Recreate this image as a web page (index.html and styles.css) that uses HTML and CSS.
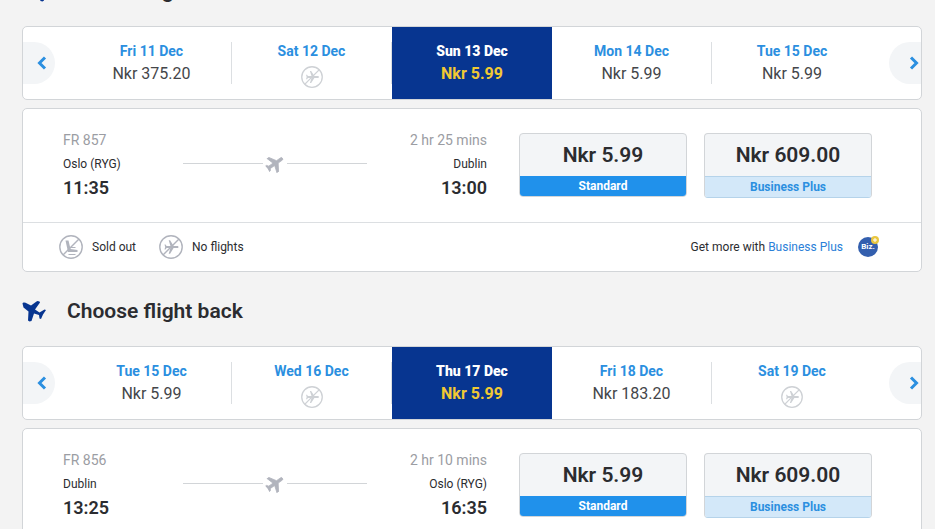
FILE: index.html
```
<!DOCTYPE html>
<html lang="en">
<head>
    <meta charset="UTF-8">
    <meta name="viewport" content="width=device-width, initial-scale=1.0">
    <title>Choose your flights</title>
    <link rel="stylesheet" href="styles.css">
</head>
<body>
    <!-- Shared icons -->
    <svg class="sprite" aria-hidden="true">
        <symbol id="jet" viewBox="0 0 28 24">
            <path d="M.5 4.500C1 3 3.500 3.500 5 4.500l4 2 5.500-4 1-.5 2 .5.5 1-5 7 4.500 3 5-3 1.500.5-3 4.500-2 4.500-1.500-.5-.5-3.500-5-1.500-2.500 7.500-2 .5-1.500-1 .5-9-5-4z"/>
        </symbol>
        <symbol id="plane" viewBox="2 2 19 20">
            <path stroke="currentColor" stroke-width=".8" d="M21 16v-2l-8-5V3.500c0-.83-.67-1.500-1.500-1.500S10 2.670 10 3.500V9l-8 5v2l8-2.500V19l-2 1.500V22l3.500-1 3.500 1v-1.500L13 19v-5.500l8 2.500z"/>
        </symbol>
        <symbol id="no-flights" viewBox="0 0 24 24">
            <circle cx="12" cy="12" r="11.2" fill="none" stroke="currentColor" stroke-width="1.400"/>
            <path d="M4 20L20 4" stroke="currentColor" stroke-width="1.400"/>
            <path transform="translate(12.5 12) rotate(90) scale(.7) translate(-11.5 -12)" fill="currentColor" d="M21 16v-2l-8-5V3.500c0-.83-.67-1.500-1.500-1.500S10 2.670 10 3.500V9l-8 5v2l8-2.500V19l-2 1.500V22l3.500-1 3.500 1v-1.500L13 19v-5.500l8 2.500z"/>
        </symbol>
        <symbol id="sold-out" viewBox="0 0 24 24">
            <circle cx="12" cy="12" r="11.2" fill="none" stroke="currentColor" stroke-width="1.400"/>
            <path d="M4 20L20 4" stroke="currentColor" stroke-width="1.400"/>
            <path fill="currentColor" d="M6.500 5.500h3l2 8.500 7 1v2H9z"/>
            <path d="M11 12.500h5.500M9.500 19.500h7" stroke="currentColor" stroke-width="1.200"/>
        </symbol>
        <symbol id="prev" viewBox="0 0 9 14">
            <path d="M7.500 1.500L2 7l5.500 5.500" fill="none" stroke="currentColor" stroke-width="3"/>
        </symbol>
        <symbol id="next" viewBox="0 0 9 14">
            <path d="M1.500 1.500L7 7l-5.500 5.500" fill="none" stroke="currentColor" stroke-width="3"/>
        </symbol>
    </svg>

    <main>
        <!-- OUTBOUND -->
        <section>
            <h2><svg class="out"><use href="#jet"/></svg>Choose flight out</h2>
            <div class="dates">
                <button class="arrow prev" aria-label="Earlier dates"><svg><use href="#prev"/></svg></button>
                <button class="day"><b>Fri 11 Dec</b><span>Nkr 375.20</span></button>
                <button class="day"><b>Sat 12 Dec</b><svg><use href="#no-flights"/></svg></button>
                <button class="day selected"><b>Sun 13 Dec</b><span>Nkr 5.99</span></button>
                <button class="day"><b>Mon 14 Dec</b><span>Nkr 5.99</span></button>
                <button class="day"><b>Tue 15 Dec</b><span>Nkr 5.99</span></button>
                <button class="arrow next" aria-label="Later dates"><svg><use href="#next"/></svg></button>
            </div>
            <div class="card">
                <div class="flight">
                    <div class="stop">
                        <span class="info">FR 857</span>
                        <span>Oslo (RYG)</span>
                        <strong>11:35</strong>
                    </div>
                    <div class="route"><svg><use href="#plane"/></svg></div>
                    <div class="stop arrival">
                        <span class="info">2 hr 25 mins</span>
                        <span>Dublin</span>
                        <strong>13:00</strong>
                    </div>
                    <button class="fare standard"><strong>Nkr 5.99</strong><span>Standard</span></button>
                    <button class="fare business"><strong>Nkr 609.00</strong><span>Business Plus</span></button>
                </div>
                <div class="legend">
                    <svg><use href="#sold-out"/></svg><span>Sold out</span>
                    <svg><use href="#no-flights"/></svg><span>No flights</span>
                    <p>Get more with <a href="#">Business Plus</a></p>
                    <div class="biz">
                        Biz.
                        <svg viewBox="0 0 8 8">
                            <circle cx="4" cy="4" r="4" fill="#e9c63f"/>
                            <path d="M4 2v4M2 4h4" stroke="#fff"/>
                        </svg>
                    </div>
                </div>
            </div>
        </section>

        <!-- RETURN -->
        <section>
            <h2><svg><use href="#jet"/></svg>Choose flight back</h2>
            <div class="dates">
                <button class="arrow prev" aria-label="Earlier dates"><svg><use href="#prev"/></svg></button>
                <button class="day"><b>Tue 15 Dec</b><span>Nkr 5.99</span></button>
                <button class="day"><b>Wed 16 Dec</b><svg><use href="#no-flights"/></svg></button>
                <button class="day selected"><b>Thu 17 Dec</b><span>Nkr 5.99</span></button>
                <button class="day"><b>Fri 18 Dec</b><span>Nkr 183.20</span></button>
                <button class="day"><b>Sat 19 Dec</b><svg><use href="#no-flights"/></svg></button>
                <button class="arrow next" aria-label="Later dates"><svg><use href="#next"/></svg></button>
            </div>
            <div class="card">
                <div class="flight">
                    <div class="stop">
                        <span class="info">FR 856</span>
                        <span>Dublin</span>
                        <strong>13:25</strong>
                    </div>
                    <div class="route"><svg><use href="#plane"/></svg></div>
                    <div class="stop arrival">
                        <span class="info">2 hr 10 mins</span>
                        <span>Oslo (RYG)</span>
                        <strong>16:35</strong>
                    </div>
                    <button class="fare standard"><strong>Nkr 5.99</strong><span>Standard</span></button>
                    <button class="fare business"><strong>Nkr 609.00</strong><span>Business Plus</span></button>
                </div>
            </div>
        </section>
    </main>
</body>
</html>
```
FILE: styles.css
```
* {
    box-sizing: border-box;
}
html {
    scrollbar-width: none;
}
body {
    margin: 0;
    font-family: Roboto, Arial, sans-serif;
    font-size: 12px;
    color: #2b2c30;
    background: #f3f3f3;
}
main {
    display: flow-root;
    margin: -48px 13px 0 22px;
}
button {
    padding: 0;
    border: 0;
    font: inherit;
    color: inherit;
    background: none;
    cursor: pointer;
}
svg {
    flex: none;
    fill: currentColor;
}
.sprite {
    position: absolute;
    width: 0;
    height: 0;
}
h2 {
    display: flex;
    align-items: center;
    gap: 17px;
    height: 74px;
    margin: 0;
    padding-top: 4px;
    font-size: 21px;
    font-weight: 600;
}
h2 svg {
    width: 28px;
    height: 24px;
    color: #073590;
}
h2 .out {
    transform: scaleX(-1);
}

/* Date picker */
.dates {
    display: grid;
    grid-template-columns: 49px repeat(5, 1fr) 49px;
    align-items: center;
    height: 74px;
    border: 1px solid #d2d5d8;
    border-radius: 5px;
    background: #fff;
}
.arrow {
    display: flex;
    align-items: center;
    width: 32px;
    height: 42px;
    color: #2b8fe0;
    background: #f3f5f7;
}
.arrow svg {
    width: 10px;
    height: 14px;
}
.prev {
    padding-left: 14px;
    border-radius: 0 22px 22px 0;
}
.next {
    justify-self: end;
    padding-left: 20px;
    border-radius: 22px 0 0 22px;
}
.day {
    display: flex;
    flex-direction: column;
    align-items: center;
    height: 42px;
    border-right: 1px solid #dcdfe2;
    font-size: 16px;
    line-height: 28px;
    color: #44464a;
}
.day b {
    font-size: 14px;
    line-height: 18px;
    color: #2b8fe0;
}
.day svg {
    width: 22px;
    height: 22px;
    margin-top: 6px;
    color: #ced1d5;
}
.day:nth-child(6) {
    border-right: 0;
}
.selected {
    height: 72px;
    padding-top: 15px;
    border: 0;
    font-weight: bold;
    color: #f1c933;
    background: #073590;
}
.selected b {
    color: #fff;
}

/* Flight card */
.card {
    margin-top: 8px;
    border: 1px solid #d2d5d8;
    border-radius: 5px;
    background: #fff;
}
.flight {
    display: flex;
    align-items: flex-start;
    padding: 19px 49px 22px 40px;
}
.stop {
    display: flex;
    flex-direction: column;
    width: 120px;
    line-height: 24px;
}
.stop .info {
    font-size: 14px;
    color: #9b9da3;
}
.stop strong {
    font-size: 18px;
    font-weight: 600;
}
.arrival {
    text-align: right;
}
.route {
    display: flex;
    flex: 1;
    align-items: center;
    gap: 3px;
    height: 70px;
}
.route::before,
.route::after {
    content: "";
    flex: 1;
    height: 1px;
    background: #d2d5d8;
}
.route svg {
    width: 18px;
    height: 19px;
    color: #b1b4bd;
    transform: rotate(55deg);
}
.fare {
    display: flex;
    flex-direction: column;
    width: 168px;
    margin: 5px 0 0 17px;
    border: 1px solid #d2d5d8;
    border-radius: 4px;
    background: #f3f5f7;
    overflow: hidden;
}
.fare strong {
    width: 100%;
    font-size: 21px;
    font-weight: 600;
    line-height: 42px;
}
.fare span {
    width: 100%;
    font-weight: bold;
    line-height: 20px;
}
.standard {
    margin-left: 32px;
}
.standard span {
    color: #fff;
    background: #2091eb;
}
.business {
    border-bottom-color: #b5d3ea;
}
.business span {
    border-top: 1px solid #b5d3ea;
    color: #2b8fe0;
    background: #d3e8f9;
}

/* Legend below the flight */
.legend {
    display: flex;
    align-items: center;
    height: 49px;
    padding: 0 43px 0 36px;
    border-top: 1px solid #dcdfe2;
}
.legend svg {
    width: 24px;
    height: 24px;
    margin-right: 9px;
    color: #b1b4bd;
}
.legend span {
    margin-right: 23px;
}
.legend p {
    margin: 0 15px 0 auto;
}
.legend a {
    color: #2b80d8;
    text-decoration: none;
}
.biz {
    position: relative;
    width: 20px;
    height: 20px;
    border-radius: 50%;
    font-size: 8px;
    font-weight: bold;
    line-height: 20px;
    text-align: center;
    color: #fff;
    background: #335fae;
}
.legend .biz svg {
    position: absolute;
    top: -1px;
    right: -1px;
    width: 8px;
    height: 8px;
    margin: 0;
}
```
